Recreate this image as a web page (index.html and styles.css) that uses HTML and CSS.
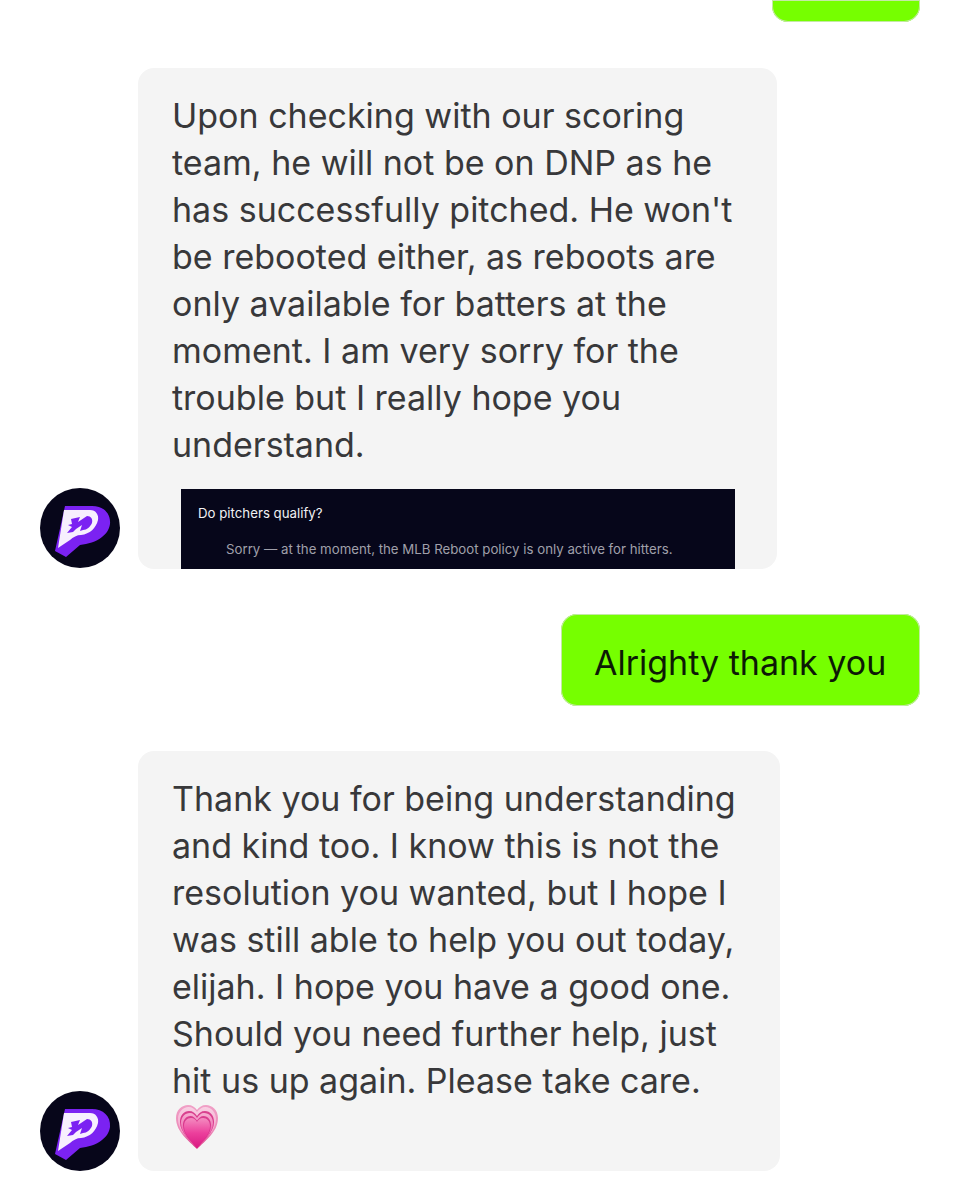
FILE: index.html
```html
<!DOCTYPE html>
<html lang="en">
<head>
<meta charset="utf-8">
<title>Chat</title>
<link rel="stylesheet" href="styles.css">
</head>
<body>
<svg class="defs" width="0" height="0" aria-hidden="true">
  <defs>
    <linearGradient id="h1" x1="0" y1="0" x2="0" y2="1"><stop offset="0" stop-color="#f0a0c6"/><stop offset="0.6" stop-color="#ec88b8"/><stop offset="1" stop-color="#d9357f"/></linearGradient>
    <linearGradient id="h2" x1="0" y1="0" x2="0" y2="1"><stop offset="0" stop-color="#f8cfe3"/><stop offset="0.6" stop-color="#f4a6cc"/><stop offset="1" stop-color="#e2348f"/></linearGradient>
    <linearGradient id="h3" x1="0" y1="0" x2="0" y2="1"><stop offset="0" stop-color="#d9438f"/><stop offset="1" stop-color="#d81f82"/></linearGradient>
    <linearGradient id="h4" x1="0" y1="0" x2="0" y2="1"><stop offset="0" stop-color="#f7b0d3"/><stop offset="1" stop-color="#e0278b"/></linearGradient>
    <linearGradient id="h5" x1="0" y1="0" x2="0" y2="1"><stop offset="0" stop-color="#d93f8f"/><stop offset="1" stop-color="#db1f85"/></linearGradient>
    <linearGradient id="h6" x1="0" y1="0" x2="0" y2="1"><stop offset="0" stop-color="#f48cc0"/><stop offset="0.5" stop-color="#ec3f9c"/><stop offset="1" stop-color="#d91a82"/></linearGradient>
    <symbol id="logo" viewBox="0 0 80 80">
      <circle cx="40" cy="40" r="40" fill="#07061a"/>
      <path d="M25 18H52C63 18 71 25 70 36C69 42 66 46 62 49C56 54 48 56 40 57L26 69L15 63Z" fill="#7b22f2"/>
      <path d="M24 22H50C56 22 59 27 58 32C56 40 50 46 41 47C37 47 33 49 30 52L18 60Z" fill="#f7effe"/>
      <path d="M31 31L40 29L38 34L47 28C51 28 53 31 52 35C50 39 47 42 43 42L40 43L42 37L36 41L33 44L27 45L32 39L28 37L32 36Z" fill="#7b22f2"/>
    </symbol>
  </defs>
</svg>
<main class="chat">
  <div class="row row-out"><div class="bubble-out stub"></div></div>

  <div class="row row-in first">
    <svg class="avatar" aria-hidden="true"><use href="#logo"/></svg>
    <div class="bubble-in bubble-a">
      <p class="msg">Upon checking with our scoring<br>team, he will not be on DNP as he<br>has successfully pitched. He won't<br>be rebooted either, as reboots are<br>only available for batters at the<br>moment. I am very sorry for the<br>trouble but I really hope you<br>understand.</p>
      <div class="shot">
        <p class="shot-q">Do pitchers qualify?</p>
        <p class="shot-a">Sorry — at the moment, the MLB Reboot policy is only active for hitters.</p>
      </div>
    </div>
  </div>

  <div class="row row-out second"><div class="bubble-out reply">Alrighty thank you</div></div>

  <div class="row row-in third">
    <svg class="avatar" aria-hidden="true"><use href="#logo"/></svg>
    <div class="bubble-in bubble-b">
      <p class="msg">Thank you for being understanding<br>and kind too. I know this is not the<br>resolution you wanted, but I hope I<br>was still able to help you out today,<br>elijah. I hope you have a good one.<br>Should you need further help, just<br>hit us up again. Please take care.</p>
      <svg class="heart" viewBox="0 0 42 44" aria-hidden="true">
        <path d="M21 44C13 36 0 27 0 13C0 5 6 0 12 0C16 0 19 2 21 5C23 2 26 0 30 0C36 0 42 5 42 13C42 27 29 36 21 44Z" fill="url(#h1)"/>
        <path d="M21 43C14 35 2 27 2 14C2 7 7 2 12.500 2C16 2 19 4 21 7C23 4 26 2 29.500 2C35 2 40 7 40 14C40 27 28 35 21 43Z" fill="url(#h2)"/>
        <path d="M21 43C15 35 4 28 4 17C4 10 8 6 13 6C17 6 19 8 21 11C23 8 25 6 29 6C34 6 38 10 38 17C38 28 27 35 21 43Z" fill="url(#h3)"/>
        <path d="M21 43C15 35 5 29 5 18C5 12 9 8 14 8C17 8 19 10 21 13C23 10 25 8 28 8C33 8 37 12 37 18C37 29 27 35 21 43Z" fill="url(#h4)"/>
        <path d="M21 43C16 36 7 30 7 20C7 15 10 11 14.500 11C17 11 19 13 21 15.500C23 13 25 11 27.500 11C32 11 35 15 35 20C35 30 26 36 21 43Z" fill="url(#h5)"/>
        <path d="M21 43C16 36 8 30 8 21C8 16 11 13 15 13C18 13 20 15 21 17C22 15 24 13 27 13C31 13 34 16 34 21C34 30 26 36 21 43Z" fill="url(#h6)"/>
      </svg>
    </div>
  </div>
</main>
</body>
</html>
```

FILE: styles.css
```css
* { box-sizing: border-box; }
html, body { margin: 0; padding: 0; background: #fff; }
body { height: 1200px; overflow: hidden; font-family: Inter, "Liberation Sans", sans-serif; }
.defs { display: block; height: 0; }
.chat { display: flex; flex-direction: column; padding: 0 41px 0 40px; }
.row { display: flex; }
.row-out { justify-content: flex-end; }
.row-in { align-items: flex-end; gap: 18px; }
.first { margin-top: 46px; }
.first .avatar { margin-bottom: 1px; }
.second { margin-top: 45px; }
.third { margin-top: 45px; }
.avatar { width: 80px; height: 80px; flex: none; display: block; }
.bubble-out { background: #76ff00; border-radius: 16px; box-shadow: 0 0 0 1px #c4e8a6 inset; }
.stub { width: 148px; height: 22px; border-radius: 0 0 16px 16px; }
.reply { width: 359px; height: 92px; padding: 25px 0 0 33px; font-size: 34px; line-height: 47px; color: #0d1a05; }
.bubble-in { background: #f4f4f4; border-radius: 16px; padding: 24px 0 0 34px; color: #38383a; }
.bubble-a { width: 639px; height: 501px; }
.bubble-b { width: 642px; height: 420px; }
.msg { margin: 0; font-size: 34px; line-height: 47px; white-space: nowrap; }
.shot { margin: 21px 0 0 9px; width: 554px; height: 80px; background: #06061a; padding: 15px 0 0 17px; font-size: 13.25px; line-height: 18px; }
.shot-q { margin: 0; color: #f1f1f4; }
.shot-a { margin: 18px 0 0 28px; color: #a0a0aa; white-space: nowrap; }
.heart { display: block; width: 42px; height: 44px; margin: 1px 0 0 4px; }
```
